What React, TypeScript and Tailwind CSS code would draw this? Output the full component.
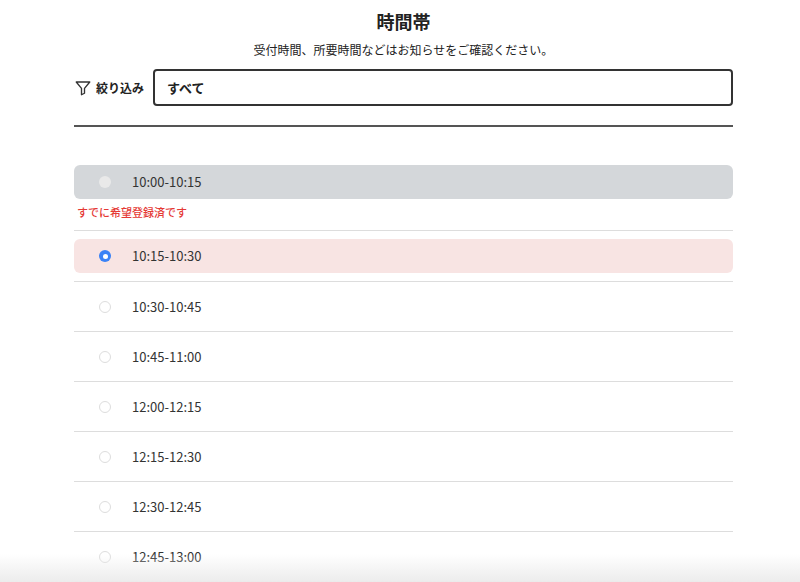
import React from "react";

const times = ["10:30-10:45","10:45-11:00","12:00-12:15","12:15-12:30","12:30-12:45","12:45-13:00"];

export default function App() {
  return (
    <div className="relative h-[582px] overflow-hidden bg-white text-[#222]" style={{ fontFamily: '"Noto Sans CJK JP", "Noto Sans", sans-serif' }}>
      <div className="ml-[74px] w-[659px] pt-[7px]">
        <h1 className="text-center text-[18px] font-bold leading-[28px]">時間帯</h1>
        <p className="mt-[6px] text-center text-[12px] leading-[18px]">受付時間、所要時間などはお知らせをご確認ください。</p>
        <div className="mt-[10px] flex items-center">
          <svg width="18" height="18" viewBox="0 0 24 24" fill="none" stroke="#333" strokeWidth="1.8" strokeLinejoin="round"><path d="M3 4h18l-7 8.5V19l-4 2v-8.5z"/></svg>
          <span className="ml-[4px] text-[12px] font-bold">絞り込み</span>
          <div className="ml-[9px] flex h-[37px] flex-1 items-center rounded-[4px] border-2 border-[#333] px-[12px] text-[13px] font-bold">すべて</div>
        </div>
        <div className="mt-[19px] h-[2px] bg-[#555]" />
        <div className="mt-[38px]">
          <div className="flex h-[34px] items-center rounded-[6px] bg-[#d4d7da] pl-[25px]">
            <span className="h-[12px] w-[12px] rounded-full bg-[#e9e9e9]" />
            <span className="ml-[21px] text-[13px] text-[#333]">10:00-10:15</span>
          </div>
          <p className="mt-[6px] pl-[3px] text-[11px] font-medium leading-[15px] text-[#e53935]">すでに希望登録済です</p>
          <div className="mt-[10px] border-t border-[#ddd] pt-[8px] pb-[8px]">
            <div className="flex h-[34px] items-center rounded-[6px] bg-[#f8e4e3] pl-[25px]">
              <span className="flex h-[12px] w-[12px] items-center justify-center rounded-full bg-[#3b82f6]"><span className="h-[5px] w-[5px] rounded-full bg-white" /></span>
              <span className="ml-[21px] text-[13px] text-[#333]">10:15-10:30</span>
            </div>
          </div>
          {times.map((t) => (
            <div key={t} className="border-t border-[#ddd] py-[8px]">
              <div className="flex h-[33px] items-center pl-[25px]">
                <span className="h-[12px] w-[12px] rounded-full border border-[#ddd]" />
                <span className="ml-[21px] text-[13px] text-[#333]">{t}</span>
              </div>
            </div>
          ))}
          <div className="border-t border-[#ccc]" />
        </div>
      </div>
      <div className="pointer-events-none absolute bottom-0 left-0 h-[28px] w-full bg-gradient-to-b from-transparent to-[#ececec]" />
    </div>
  );
}
